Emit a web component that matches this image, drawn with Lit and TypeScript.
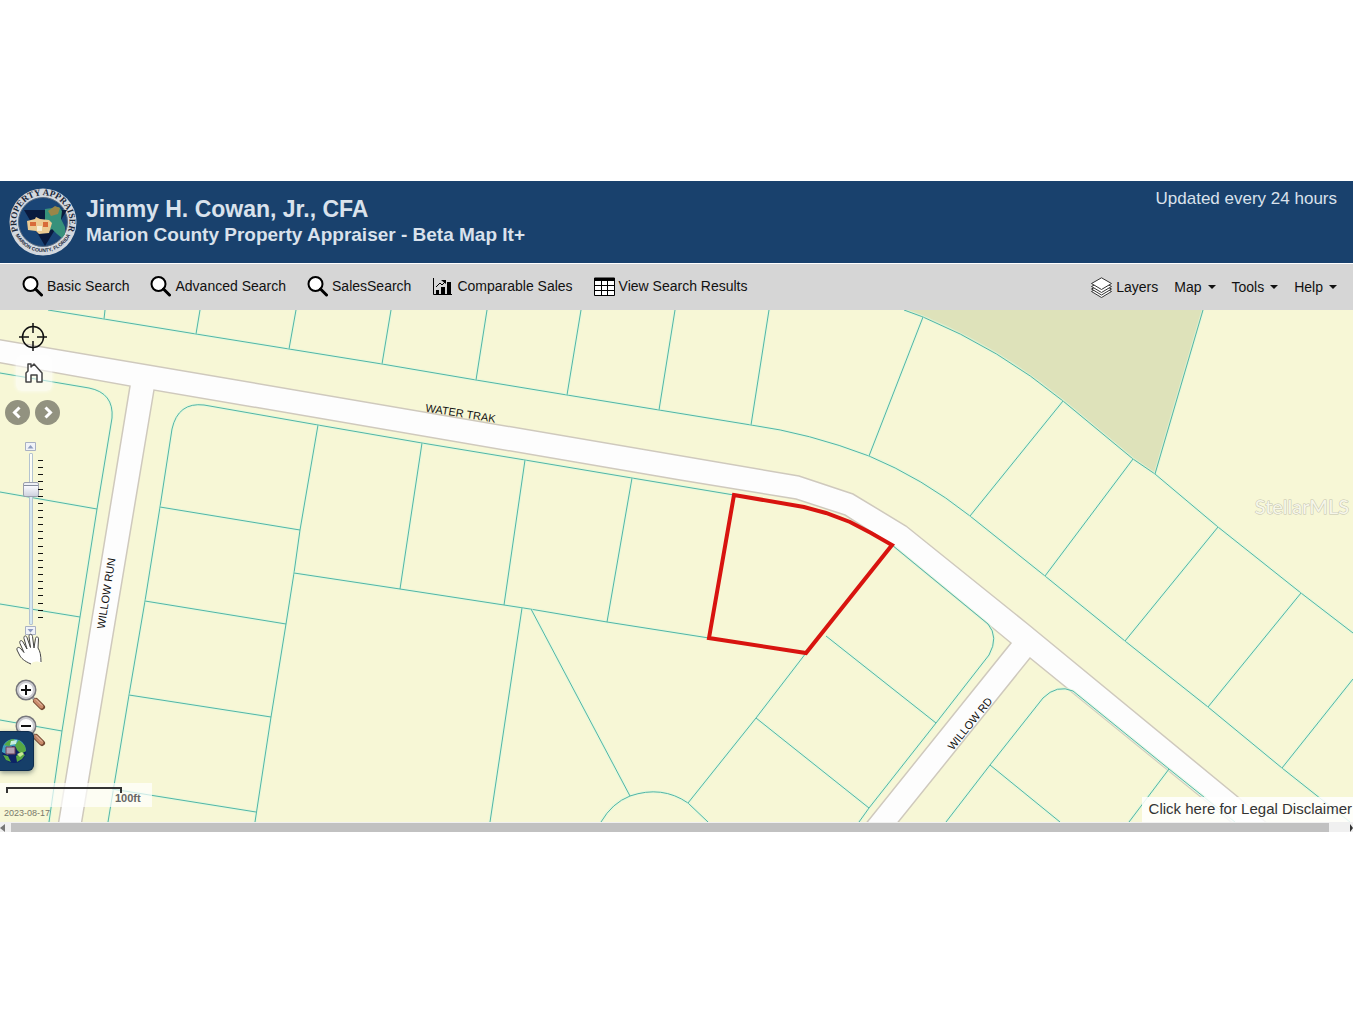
import { LitElement, html, svg, css } from "lit";
import { customElement, state } from "lit/decorators.js";

type Pt = [number, number];

const pts = (list: Pt[]) => list.map((p) => p.join(",")).join(" ");

/* Parcel boundaries, in map units. */
const BOUNDARIES: string[] = [
  "M48 310L104 319L196 334L289 349L382 364L476 380L567 395L659 410L751 425Q809 433 869 456Q922 478 970 516L1045 576L1125 641L1208 707L1282 768L1350 822",
  "M904 310L923 317Q1000 349 1063 401L1133 459L1155 474L1218 527L1301 593L1353 633",
  "M105 310L104 319M200 310L196 334M296 310L289 349M391 310L382 364M487 310L476 380M581 310L567 395M675 310L659 410M769 310L751 425",
  "M923 317L869 456M1063 401L970 516M1133 459L1045 576M1218 527L1125 641M1301 593L1208 707M1353 679L1282 768M1203 310L1155 474",
  "M0 373L89 388Q114 393 112 418L97 509L80 617L62 731L49 822M0 492L97 509M0 604L80 617M0 720L62 731",
  "M108 822L129 695L145 601L160 507L172 429Q178 402 204 405L318 425L422 443L525 460L632 478L734 495",
  "M318 425L300 530L294 573L286 624L271 717L255 822M160 507L300 530M145 601L286 624M129 695L271 717M112 789L256 812",
  "M294 573L400 589L504 605L530 609L607 622L709 638M422 443L400 589M525 460L504 605M632 478L607 622",
  "M522 608L490 822M531 609L630 796M601 822Q612 803 630 796Q662 785 688 803L708 822",
  "M806 653L756 718L688 803M826 636L936 723M756 718L869 808M892 545L988 624Q999 637 989 655L936 723L869 808L859 822",
  "M946 822L990 765L1043 698Q1057 684 1073 691L1169 769L1235 822M990 765L1060 822M1169 769L1129 822",
];

const ROAD_FILL: Pt[] = [
  [-4, 339], [799, 476], [853, 494], [906, 526], [1029, 625], [1238, 797], [1270, 826],
  [1236, 826], [1201, 797], [1030, 658], [895, 826], [864, 826], [1011, 643], [892, 545],
  [845, 515], [796, 499], [680, 480], [154, 390], [81, 826], [58, 826], [130, 386], [-4, 362],
];

const SELECTED: Pt[] = [
  [734, 495], [804, 507], [826, 513], [850, 522], [871, 533], [892, 545], [806, 653], [709, 638],
];

const searchIcon = html`<svg class="icon" viewBox="0 0 21 21" aria-hidden="true">
  <circle cx="8.500" cy="8" r="7" fill="#fff" stroke="#000" stroke-width="2" />
  <path d="M13.500 13L19.500 19" stroke="#000" stroke-width="3" stroke-linecap="round" />
</svg>`;

const chartIcon = html`<svg class="icon" viewBox="0 0 21 21" aria-hidden="true">
  <path d="M1.500 2V18.500H20" fill="none" stroke="#000" stroke-width="1" />
  <path d="M4 14H7V18H4zM9 11H13V18H9zM15 6H19V18H15z" />
  <path d="M4 11L8 7L10 9L13 6" fill="none" stroke="#000" stroke-width="1" />
  <path d="M9 4H14V8z" />
</svg>`;

const tableIcon = html`<svg class="icon" viewBox="0 0 21 21" aria-hidden="true">
  <path d="M.5 2H20.500V19.500H.5z" fill="#fff" stroke="#000" />
  <path d="M.5 2H20.500V5H.5z" />
  <path d="M1 9.500H20M1 14.500H20M7.500 5V20M13.500 5V20" stroke="#000" />
</svg>`;

const layersIcon = html`<svg class="icon" viewBox="0 0 21 21" aria-hidden="true">
  <g fill="#fff" stroke="#333" stroke-width="1" stroke-linejoin="round">
    <path d="M.5 14.500L10.500 9L20.500 14.500L10.500 20.500z" />
    <path d="M.5 12L10.500 7L20.500 12L10.500 18z" />
    <path d="M.5 9.500L10.500 4L20.500 9.500L10.500 15.500z" />
    <path d="M.5 6.500L10.500 .8L20.500 6.500L10.500 12.500z" />
  </g>
</svg>`;

const magnifier = (plus: boolean) => html`<svg class="lens" viewBox="0 0 32 34" aria-hidden="true">
  <path d="M17 18L21 22" stroke="#a9a9a9" stroke-width="3" />
  <path d="M21 22L27 28" stroke="#70452f" stroke-width="6" stroke-linecap="round" />
  <path d="M20.500 21.500L26.500 27.500" stroke="#c98b6b" stroke-width="4" stroke-linecap="round" />
  <path d="M21 20.500L27 26.500" stroke="#ecc8b2" stroke-width="1" />
  <circle cx="11" cy="11" r="9.500" fill="#fdfdfd" stroke="#77777c" stroke-width="2" />
  <circle cx="11" cy="11" r="8" fill="none" stroke="#cbcbd0" stroke-width="2" />
  <path d=${plus ? "M6 11H16M11 6V16" : "M6 11H16"} stroke="#111" stroke-width="2" />
</svg>`;

const seal = html`<svg class="seal" viewBox="0 0 68 68" role="img" aria-label="Property Appraiser, Marion County, Florida">
  <defs>
    <path id="arc-top" d="M10.500 46A26.500 26.500 0 1 1 57.500 46" />
    <path id="arc-bottom" d="M4 39A30.500 30.500 0 0 0 64 39" />
  </defs>
  <circle cx="34" cy="34" r="33.500" fill="#d3d8de" />
  <circle cx="34" cy="34" r="24.500" fill="#1a4576" stroke="#596a80" stroke-width="1" />
  <path d="M15 22H58L36 58z" fill="#0a1a3e" />
  <path d="M36 21L50 19L53 23L52 31L56 39L56 46L53 50L48 46L43 41L39 44L33 41L36 32z" fill="#37917b" />
  <path d="M39 23L46 18L51 20L49 26L42 28z" fill="#9a8648" />
  <path d="M18 33L26 31L27 29L31 31L40 32L43 35L40 45L30 46L27 43L19 42z" fill="#ecca92" />
  <path d="M21 34H27V38H21zM34 34H39V39H34z" fill="#d86b3a" />
  <path d="M28 38H33V43H28z" fill="#f6eed4" />
  <text class="seal-top"><textPath href="#arc-top" startOffset="50%">PROPERTY APPRAISER</textPath></text>
  <text class="seal-bottom"><textPath href="#arc-bottom" startOffset="50%">MARION COUNTY, FLORIDA</textPath></text>
</svg>`;

@customElement("parcel-map")
export class ParcelMap extends LitElement {
  static styles = css`
    :host { display: block; }
    svg { display: block; width: 100%; height: auto; }
    .land { fill: #f7f7d6; }
    .reserve { fill: #dee2ba; }
    .road { fill: #fdfdfd; stroke: #cfc9bd; stroke-width: 1.5; }
    .halo { fill: none; stroke: #dcf9dc; stroke-width: 3; opacity: 0.6; }
    .line { fill: none; stroke: #52b5a6; stroke-width: 1; }
    .selected { fill: none; stroke: #d8140f; stroke-width: 4; stroke-linejoin: miter; }
    .street { font: 11px "Liberation Sans", Arial, sans-serif; fill: #111; text-anchor: middle; }
    .mark {
      font: 20px Lato, "Liberation Sans", sans-serif;
      fill: #f6f6ea; stroke: #c2c2ae; stroke-width: 1; paint-order: stroke; text-anchor: end;
    }
  `;

  render() {
    return html`<svg viewBox="0 310 1353 512" role="img" aria-label="Parcel map">
      <rect class="land" x="0" y="310" width="1353" height="512" />
      <path class="reserve" d="M904 310L923 317Q1000 349 1063 401L1133 459L1155 474L1203 310z" />
      <polygon class="road" points=${pts(ROAD_FILL)} />
      ${BOUNDARIES.map((d) => svg`<path class="halo" d=${d} /><path class="line" d=${d} />`)}
      <polygon class="selected" points=${pts(SELECTED)} />
      <text class="street" transform="translate(460 417) rotate(9)">WATER TRAK</text>
      <text class="street" transform="translate(110 594) rotate(-81)">WILLOW RUN</text>
      <text class="street" transform="translate(973 726) rotate(-51)">WILLOW RD</text>
      <text class="mark" x="1349" y="514">StellarMLS</text>
    </svg>`;
  }
}

@customElement("map-controls")
export class MapControls extends LitElement {
  @state() private level = 18;

  static styles = css`
    :host { display: block; width: 66px; }
    button { display: block; padding: 0; border: 0; background: none; cursor: pointer; }
    svg { display: block; }
    .column { display: flex; flex-direction: column; align-items: flex-start; padding-top: 12px; }
    .locate { margin-left: 18px; }
    .locate svg { width: 30px; height: 30px; }
    .home { margin: 3px 0 0 16px; padding: 8px; border-radius: 6px; background: rgba(255, 255, 255, 0.55); box-shadow: 0 0 4px rgba(255, 255, 255, 0.8); }
    .home svg { width: 20px; height: 20px; }
    .history { display: flex; gap: 5px; margin: 9px 0 0 5px; }
    .history svg { width: 25px; height: 25px; }
    .zoom { display: flex; gap: 2px; margin: 17px 0 0 25px; }
    .rail { display: flex; flex-direction: column; align-items: center; gap: 1px; width: 11px; }
    .step svg { width: 11px; height: 10px; }
    .ticks { display: flex; flex-direction: column; justify-content: space-between; height: 158px; margin-top: 18px; }
    .tick { width: 5px; height: 1px; background: #111; }
    input {
      appearance: none; writing-mode: vertical-lr; direction: rtl; width: 16px; height: 172px;
      margin: 0 -3px; background: transparent;
    }
    input::-webkit-slider-runnable-track {
      appearance: none; width: 4px; height: 172px; border: 1px solid #b4c3d0; border-radius: 1px;
      box-sizing: border-box; background: linear-gradient(#fdfdf6 20%, #d5e8f1 28%);
    }
    input::-webkit-slider-thumb {
      appearance: none; width: 16px; height: 15px; margin-left: -7px; border: 1px solid #9b9fae;
      border-radius: 2px; box-sizing: border-box;
      background: linear-gradient(#eef0f6 2px, #888e9e 2px, #888e9e 3px, #fafaff 3px, #cfd3df);
    }
    .hand { margin: -4px 0 0 15px; }
    .hand svg { width: 28px; height: 34px; }
    .in { margin: 13px 0 0 15px; }
    .out { margin: 2px 0 0 15px; }
    .lens { width: 32px; height: 34px; }
  `;

  render() {
    return html`<div class="column">
      <button class="locate" aria-label="Find my location">
        <svg viewBox="0 0 30 30"><g fill="none" stroke="#111" stroke-width="1.500"><circle cx="15" cy="15" r="10.500" /><path d="M15 1V11M15 19V29M1 15H11M19 15H29" /></g></svg>
      </button>
      <button class="home" aria-label="Home extent">
        <svg viewBox="0 0 20 20"><path d="M2 19V10L4 8V1H7V4L10 1L18 10V19H13V12H7V19z" fill="#fff" stroke="#444" stroke-width="1.500" stroke-linejoin="round" /></svg>
      </button>
      <div class="history">
        <button aria-label="Previous extent">
          <svg viewBox="0 0 25 25"><circle cx="12.500" cy="12.500" r="12.500" fill="#929280" /><path d="M14.500 7.500L9.500 12.500L14.500 17.500" fill="none" stroke="#fff" stroke-width="3" /></svg>
        </button>
        <button aria-label="Next extent">
          <svg viewBox="0 0 25 25"><circle cx="12.500" cy="12.500" r="12.500" fill="#929280" /><path d="M10.500 7.500L15.500 12.500L10.500 17.500" fill="none" stroke="#fff" stroke-width="3" /></svg>
        </button>
      </div>
      <div class="zoom">
        <div class="rail">
          <button class="step" aria-label="Zoom in one level" @click=${() => (this.level = Math.min(22, this.level + 1))}>
            <svg viewBox="0 0 11 10"><path d="M.5 .5H10.500V8.500H.5z" fill="#f1f3f8" stroke="#a9b1c2" /><path d="M2.500 6.500L5.500 3L8.500 6.500z" fill="#8e9cc0" /></svg>
          </button>
          <input type="range" min="0" max="22" aria-label="Zoom level" .value=${String(this.level)}
            @input=${(e: Event) => (this.level = Number((e.target as HTMLInputElement).value))} />
          <button class="step" aria-label="Zoom out one level" @click=${() => (this.level = Math.max(0, this.level - 1))}>
            <svg viewBox="0 0 11 10"><path d="M.5 .5H10.500V8.500H.5z" fill="#f1f3f8" stroke="#a9b1c2" /><path d="M2.500 3L5.500 6.500L8.500 3z" fill="#8e9cc0" /></svg>
          </button>
        </div>
        <div class="ticks">${Array.from({ length: 23 }, () => html`<div class="tick"></div>`)}</div>
      </div>
      <button class="hand" aria-label="Pan">
        <svg viewBox="0 0 28 34"><path d="M16 32C9 29 6 26 4.500 23L2 18C1.500 15 4 14.500 6 17L9 20.500L5 11.500C4 8.500 6.500 7.500 8 10L12 17L9 6.500C8.500 3.500 11 3 12 5.500L15.500 15.500L14 4.500C14 1.500 17 1.500 17.500 4.500L19 16L20.500 6.500C21 4 23.500 4.500 23.500 7L23 18C26 20 27 25 26 31C22 29 19 29 16 32z" fill="#fff" /><path d="M16 32C9 29 6 26 4.500 23L2 18C1.500 15 4 14.500 6 17L9 20.500L5 11.500C4 8.500 6.500 7.500 8 10L12 17L9 6.500C8.500 3.500 11 3 12 5.500L15.500 15.500L14 4.500C14 1.500 17 1.500 17.500 4.500L19 16L20.500 6.500C21 4 23.500 4.500 23.500 7L23 16Q26 20 26 30" fill="none" stroke="#444" stroke-width="1" /></svg>
      </button>
      <button class="in" aria-label="Zoom in">${magnifier(true)}</button>
      <button class="out" aria-label="Zoom out">${magnifier(false)}</button>
    </div>`;
  }
}

@customElement("app-root")
export class AppRoot extends LitElement {
  static styles = css`
    :host {
      display: flex; flex-direction: column; justify-content: center; min-height: 100vh; padding-bottom: 1px;
      box-sizing: border-box; background: #fff; font-family: "Liberation Sans", Arial, sans-serif; color: #111;
    }
    header {
      display: flex; justify-content: space-between; align-items: flex-start;
      padding: 7px 16px 7px 9px; background: #19416d; color: #d9e2ec;
    }
    .brand { display: flex; gap: 9px; }
    .seal { display: block; width: 68px; height: 68px; }
    .seal-top { font: bold 9px "Liberation Serif", serif; fill: #1a2638; text-anchor: middle; }
    .seal-bottom { font: bold 5px "Liberation Sans", sans-serif; fill: #1a2638; text-anchor: middle; }
    .titles { padding-top: 8px; }
    h1, h2 { margin: 0; font-weight: bold; }
    h1 { font-size: 23px; line-height: 26px; }
    h2 { font-size: 19px; line-height: 26px; }
    .updated { margin: 0; font-size: 17px; line-height: 22px; }
    nav {
      display: flex; justify-content: space-between; align-items: center; height: 46px; margin-top: 1px;
      padding: 0 16px 0 22px; background: #d6d6d6;
    }
    .group { display: flex; align-items: center; gap: 21px; }
    .searches { padding-bottom: 2px; }
    .menus { gap: 16px; }
    nav button {
      display: flex; align-items: center; gap: 4px; padding: 0; border: 0; background: none;
      font: 14px/20px "Liberation Sans", Arial, sans-serif; color: #111; cursor: pointer;
    }
    nav .menu { gap: 6px; }
    .icon { width: 21px; height: 21px; }
    .caret { border: 4px solid transparent; border-top-color: #111; border-bottom: 0; }
    .map { position: relative; overflow: hidden; }
    .controls { position: absolute; left: 0; top: 0; }
    .overview {
      position: absolute; left: 0; top: 421px; width: 34px; height: 40px; padding: 0; border: 1px solid #0d2c4d;
      border-left: 0; border-radius: 0 6px 6px 0; background: #163f69; box-shadow: 0 2px 5px rgba(40, 60, 60, 0.5);
    }
    .overview svg { display: block; width: 26px; height: 26px; }
    .scale { position: absolute; left: 0; bottom: 15px; width: 152px; height: 24px; background: rgba(255, 255, 255, 0.7); }
    .bar { width: 112px; height: 4px; margin: 4px 0 0 6px; border: 2px solid #333; border-bottom: 0; }
    .unit { display: block; margin-left: 115px; font-size: 11px; line-height: 11px; font-weight: bold; color: #666; }
    .date { position: absolute; left: 4px; bottom: 4px; font-size: 9px; line-height: 10px; color: #77776a; }
    .legal {
      position: absolute; right: 0; bottom: 0; padding: 0 1px 2px 7px; background: rgba(255, 255, 255, 0.85);
      font-size: 15px; line-height: 23px; color: #333; text-decoration: none;
    }
    .scroll { display: flex; align-items: flex-end; height: 10px; background: #f0f0f0; }
    .thumb { flex: 1; height: 9px; margin: 0 21px 0 6px; background: #c1c1c1; }
    .prev { border: 4px solid transparent; border-right: 5px solid #777; border-left: 0; }
    .next { border: 4px solid transparent; border-left: 3px solid #333; border-right: 0; }
  `;

  render() {
    return html`
      <header>
        <div class="brand">
          ${seal}
          <div class="titles">
            <h1>Jimmy H. Cowan, Jr., CFA</h1>
            <h2>Marion County Property Appraiser - Beta Map It+</h2>
          </div>
        </div>
        <p class="updated">Updated every 24 hours</p>
      </header>
      <nav>
        <div class="group searches">
          <button>${searchIcon}Basic Search</button>
          <button>${searchIcon}Advanced Search</button>
          <button>${searchIcon}SalesSearch</button>
          <button>${chartIcon}Comparable Sales</button>
          <button>${tableIcon}View Search Results</button>
        </div>
        <div class="group menus">
          <button>${layersIcon}Layers</button>
          ${["Map", "Tools", "Help"].map((m) => html`<button class="menu">${m}<span class="caret"></span></button>`)}
        </div>
      </nav>
      <div class="map">
        <parcel-map></parcel-map>
        <map-controls class="controls"></map-controls>
        <button class="overview" aria-label="Basemaps">
          <svg viewBox="0 0 26 26">
            <circle cx="14" cy="13" r="12" fill="#0c2366" />
            <path d="M2 14C2 6 7 1 14 1C21 1 26 6 26 13L21 15L18 9L12 8L8 17z" fill="#3f9fc0" />
            <path d="M4 7C7 3 10 1 14 1L15 5L9 8zM15 7L19 2L25 8L26 13L21 16L17 12zM16 18L22 15L25 17L22 21L17 24zM3 17L8 18L11 24L6 22z" fill="#57a944" />
            <path d="M11 3L17 2L16 6L10 7z" fill="#c8efe0" />
            <path d="M17 16L22 14L24 16L20 19z" fill="#c9e896" />
            <path d="M6 9H15V16H6z" fill="#b3a0b4" stroke="#6d3f55" stroke-width="1" />
          </svg>
        </button>
        <div class="scale"><div class="bar"></div><span class="unit">100ft</span></div>
        <span class="date">2023-08-17</span>
        <a class="legal" href="#disclaimer">Click here for Legal Disclaimer</a>
      </div>
      <div class="scroll" aria-hidden="true"><span class="prev"></span><span class="thumb"></span><span class="next"></span></div>
    `;
  }
}
